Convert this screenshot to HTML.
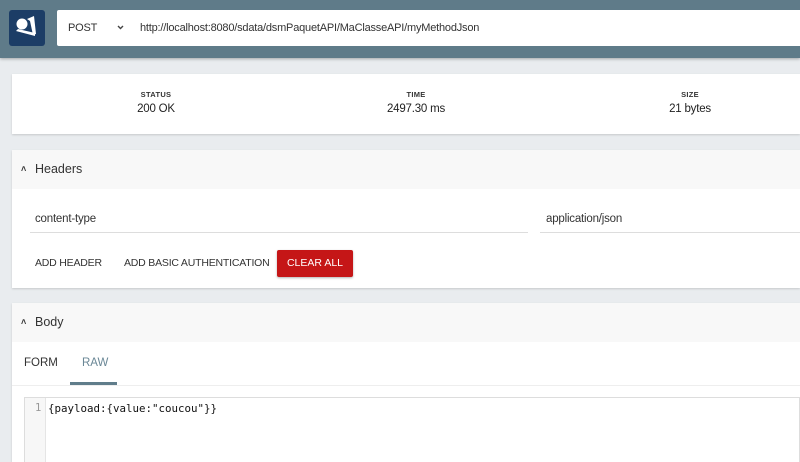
<!DOCTYPE html>
<html style="overflow:hidden"><head><style>
*{margin:0;padding:0;box-sizing:border-box}
html,body{width:800px;height:462px;overflow:hidden}
body{background:#e9ecef;font-family:"Liberation Sans",sans-serif;color:#222;position:relative}
.abs{position:absolute}
.top{left:0;top:0;width:800px;height:58px;background:#5f7b89;box-shadow:0 1px 3px rgba(0,0,0,.3)}
.logo{left:9px;top:10px;width:36px;height:36px;background:#1c3d66;border-radius:3px}
.inp{left:57px;top:10px;width:743px;height:36px;background:#fff;border-radius:2px 0 0 2px;font-size:11px;color:#333;letter-spacing:-0.2px}
.card{background:#fff;box-shadow:0 1px 2px rgba(0,0,0,.15);overflow:hidden}
.lbl{font-size:7.5px;font-weight:bold;color:#333;text-align:center;letter-spacing:.3px}
.val{font-size:11.5px;color:#222;text-align:center;letter-spacing:-0.2px}
.hdr{background:#f8f8f8;font-size:12.5px;color:#333}
.btn{font-size:10.5px;color:#333;letter-spacing:-0.2px}
</style></head><body>
<div class="abs top"></div>
<div class="abs logo"><svg width="36" height="36" viewBox="0 0 36 36"><circle cx="13" cy="14" r="5.5" fill="#fff"/><path d="M18 9 L25 6 L27 24 L24 25 L21 11 Z" fill="#fff"/><path d="M7 21 L9 19 L26 23 L26 26 Z" fill="#fff"/></svg></div>
<div class="abs inp"><span class="abs" style="left:11px;top:12px;font-size:11px">POST</span><svg class="abs" style="left:60px;top:15px" width="7" height="5" viewBox="0 0 7 5"><path d="M1 1 L3.5 3.5 L6 1" stroke="#444" stroke-width="1.4" fill="none"/></svg><span class="abs" style="left:83px;top:12px">http://localhost:8080/sdata/dsmPaquetAPI/MaClasseAPI/myMethodJson</span></div>

<div class="abs card" style="left:12px;top:74px;width:788px;height:60px">
<div class="abs lbl" style="left:104px;top:16px;width:80px">STATUS</div><div class="abs val" style="left:104px;top:29px;width:80px">200 OK</div>
<div class="abs lbl" style="left:364px;top:16px;width:80px">TIME</div><div class="abs val" style="left:354px;top:29px;width:100px">2497.30 ms</div>
<div class="abs lbl" style="left:638px;top:16px;width:80px">SIZE</div><div class="abs val" style="left:638px;top:29px;width:80px">21 bytes</div>
</div>

<div class="abs card" style="left:12px;top:150px;width:788px;height:138px">
<div class="abs hdr" style="left:0;top:0;width:788px;height:39px"><span class="abs" style="left:9px;top:14px;font-size:9px;font-weight:bold">&#708;</span><span class="abs" style="left:23px;top:12px">Headers</span></div>
<div class="abs" style="left:23px;top:63px;font-size:11.5px;color:#333;letter-spacing:-0.2px">content-type</div>
<div class="abs" style="left:18px;top:82px;width:498px;height:1px;background:#ddd"></div>
<div class="abs" style="left:534px;top:63px;font-size:11.5px;color:#333;letter-spacing:-0.2px">application/json</div>
<div class="abs" style="left:528px;top:82px;width:260px;height:1px;background:#ddd"></div>
<div class="abs btn" style="left:23px;top:107px">ADD HEADER</div>
<div class="abs btn" style="left:112px;top:107px">ADD BASIC AUTHENTICATION</div>
<div class="abs" style="left:265px;top:100px;width:76px;height:27px;background:#c51617;border-radius:2px;color:#fff;font-size:10.5px;text-align:center;line-height:27px;box-shadow:0 1px 2px rgba(0,0,0,.3)">CLEAR ALL</div>
</div>

<div class="abs card" style="left:12px;top:303px;width:788px;height:159px">
<div class="abs hdr" style="left:0;top:0;width:788px;height:39px"><span class="abs" style="left:9px;top:14px;font-size:9px;font-weight:bold">&#708;</span><span class="abs" style="left:23px;top:12px">Body</span></div>
<div class="abs" style="left:12px;top:54px;font-size:11.5px;color:#333">FORM</div>
<div class="abs" style="left:70px;top:54px;font-size:11.5px;color:#6a8796">RAW</div>
<div class="abs" style="left:58px;top:79px;width:47px;height:3px;background:#607d8b"></div>
<div class="abs" style="left:0;top:82px;width:788px;height:1px;background:#eee"></div>
<div class="abs" style="left:12px;top:94px;width:776px;height:80px;border:1px solid #ddd;background:#fff"></div>
<div class="abs" style="left:13px;top:95px;width:21px;height:80px;background:#f7f7f7;border-right:1px solid #e5e5e5"></div>
<div class="abs" style="left:23px;top:99px;font-family:'DejaVu Sans Mono',monospace;font-size:10.5px;color:#999">1</div>
<div class="abs" style="left:36px;top:99px;font-family:'DejaVu Sans Mono',monospace;font-size:10.8px;color:#111">{payload:{value:"coucou"}}</div>
</div>
</body></html>
